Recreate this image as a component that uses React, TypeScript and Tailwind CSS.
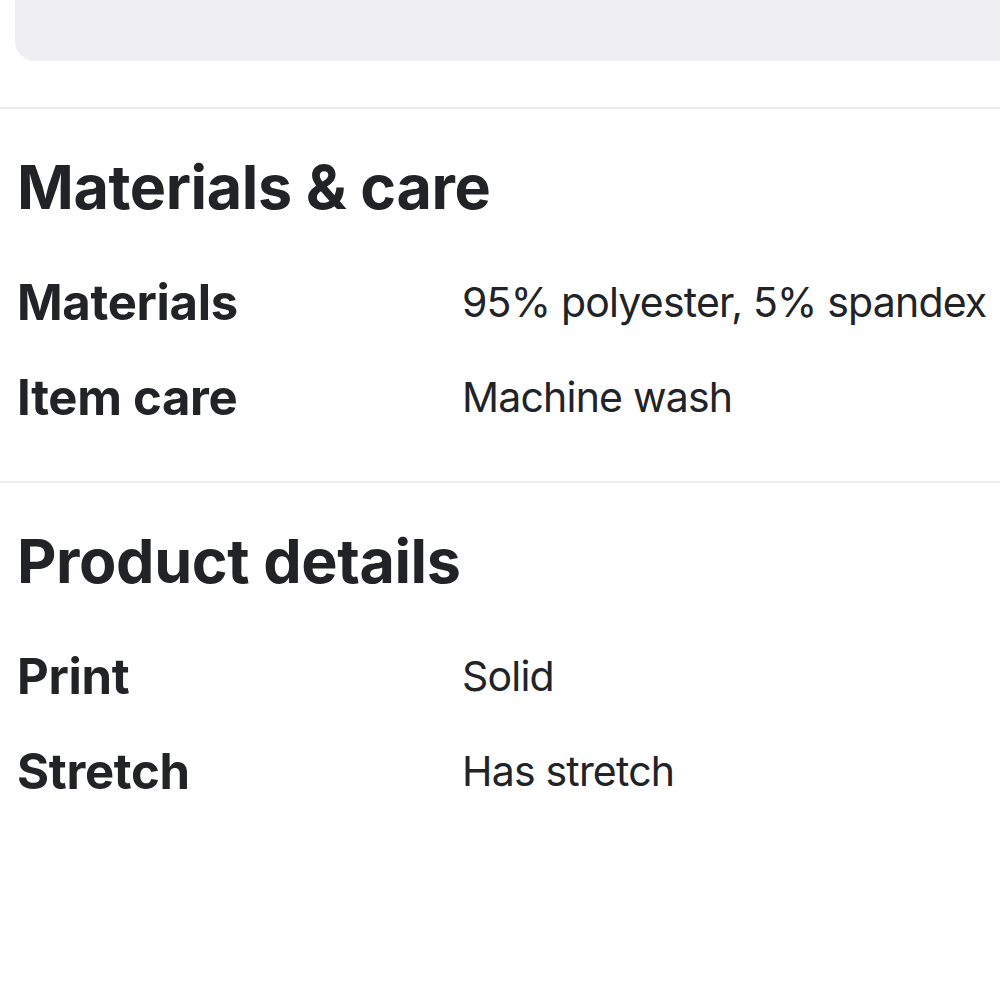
import React from 'react';

type Spec = { label: string; value: string };

const sections: { title: string; rows: Spec[] }[] = [
  {
    title: 'Materials & care',
    rows: [
      { label: 'Materials', value: '95% polyester, 5% spandex' },
      { label: 'Item care', value: 'Machine wash' },
    ],
  },
  {
    title: 'Product details',
    rows: [
      { label: 'Print', value: 'Solid' },
      { label: 'Stretch', value: 'Has stretch' },
    ],
  },
];

const SpecSection: React.FC<{ title: string; rows: Spec[] }> = ({ title, rows }) => (
  <section className="px-[17px] pt-[42px]">
    <h2 className="text-[61px] leading-[1.2] font-bold tracking-[-0.4px]">{title}</h2>
    <div className="mt-[50px] flex flex-col gap-[37px]">
      {rows.map((row) => (
        <div key={row.label} className="flex items-start">
          <div className="w-[445px] shrink-0 text-[49px] leading-[58px] font-bold tracking-[-0.3px]">{row.label}</div>
          <div className="mt-[3px] text-[41px] leading-[50px] tracking-[-0.8px] whitespace-nowrap">{row.value}</div>
        </div>
      ))}
    </div>
  </section>
);

export default function App() {
  return (
    <div className="w-[1000px] h-[1000px] overflow-hidden bg-white text-[#222326] font-['Inter',sans-serif]">
      <div className="ml-[15px] h-[61px] rounded-bl-[20px] bg-[#efeff1]" />
      <div className="mt-[46px] h-[2px] bg-[#ececec]" />
      <SpecSection {...sections[0]} />
      <div className="mt-[54px] h-[2px] bg-[#ececec]" />
      <SpecSection {...sections[1]} />
    </div>
  );
}
